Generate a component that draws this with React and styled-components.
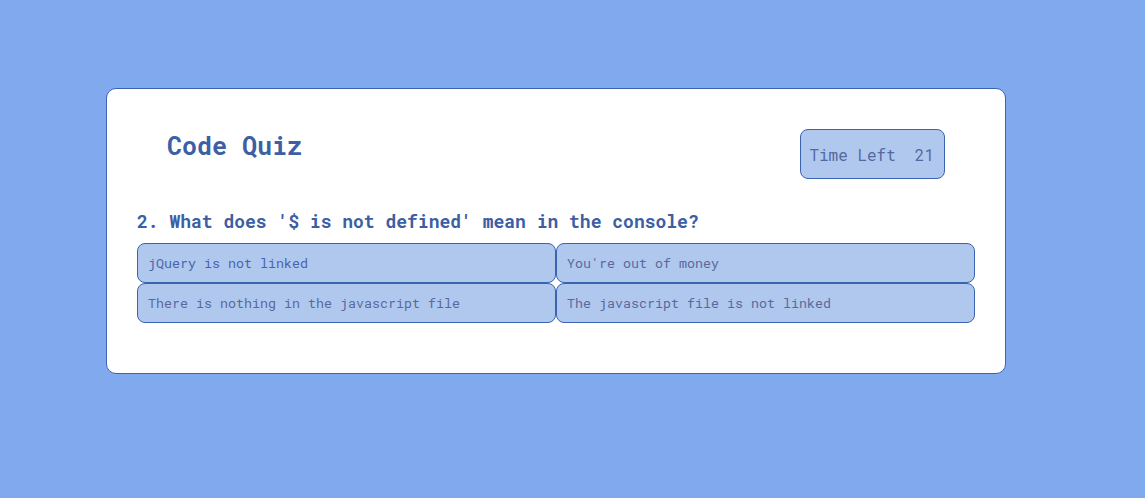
import React from 'react';
import styled, { createGlobalStyle } from 'styled-components';

const GlobalStyle = createGlobalStyle`
  body {
    margin: 0;
    background: #81aaee;
    font-family: "Roboto Mono", "DejaVu Sans Mono", "Liberation Mono", monospace;
  }
`;

const Page = styled.div`
  min-height: 498px;
  padding: 88px 0 0 106px;
  box-sizing: border-box;
`;

const Card = styled.main`
  width: 900px;
  box-sizing: border-box;
  padding: 40px 30px 50px;
  background: #ffffff;
  border: 1px solid #3a64b0;
  border-radius: 10px;
`;

const Header = styled.header`
  display: flex;
  justify-content: space-between;
  align-items: flex-start;
  padding: 0 30px 0 30px;
`;

const Title = styled.h1`
  margin: 2px 0 0;
  font-size: 25px;
  line-height: 30px;
  font-weight: 700;
  color: #3c5fa6;
`;

const Timer = styled.div`
  display: flex;
  align-items: center;
  height: 50px;
  box-sizing: border-box;
  padding: 0 10px 0 8px;
  background: #b0c8ee;
  border: 1px solid #3a64b0;
  border-radius: 8px;
  font-size: 16px;
  color: #56699f;
  white-space: pre;
`;

const Count = styled.span`
  margin-left: 19px;
`;

const Question = styled.h2`
  margin: 30px 0 10px;
  font-size: 18px;
  line-height: 24px;
  font-weight: 700;
  color: #3c5ea3;
`;

const Answers = styled.div`
  display: grid;
  grid-template-columns: 1fr 1fr;
`;

const Answer = styled.button`
  height: 40px;
  padding: 0 10px;
  text-align: left;
  font-family: inherit;
  font-size: 13.333px;
  color: ${p => (p.$active ? '#4766aa' : '#59699d')};
  background: #b0c8ee;
  border: 1px solid #3a64b0;
  border-radius: 8px;
  cursor: pointer;
`;

const answers = [
  'jQuery is not linked',
  "You're out of money",
  'There is nothing in the javascript file',
  'The javascript file is not linked',
];

export default function App() {
  return (
    <>
      <GlobalStyle />
      <Page>
        <Card>
          <Header>
            <Title>Code Quiz</Title>
            <Timer>
              Time Left<Count>21</Count>
            </Timer>
          </Header>
          <Question>2. What does '$ is not defined' mean in the console?</Question>
          <Answers>
            {answers.map((a, i) => (
              <Answer key={a} $active={i === 0}>
                {a}
              </Answer>
            ))}
          </Answers>
        </Card>
      </Page>
    </>
  );
}
